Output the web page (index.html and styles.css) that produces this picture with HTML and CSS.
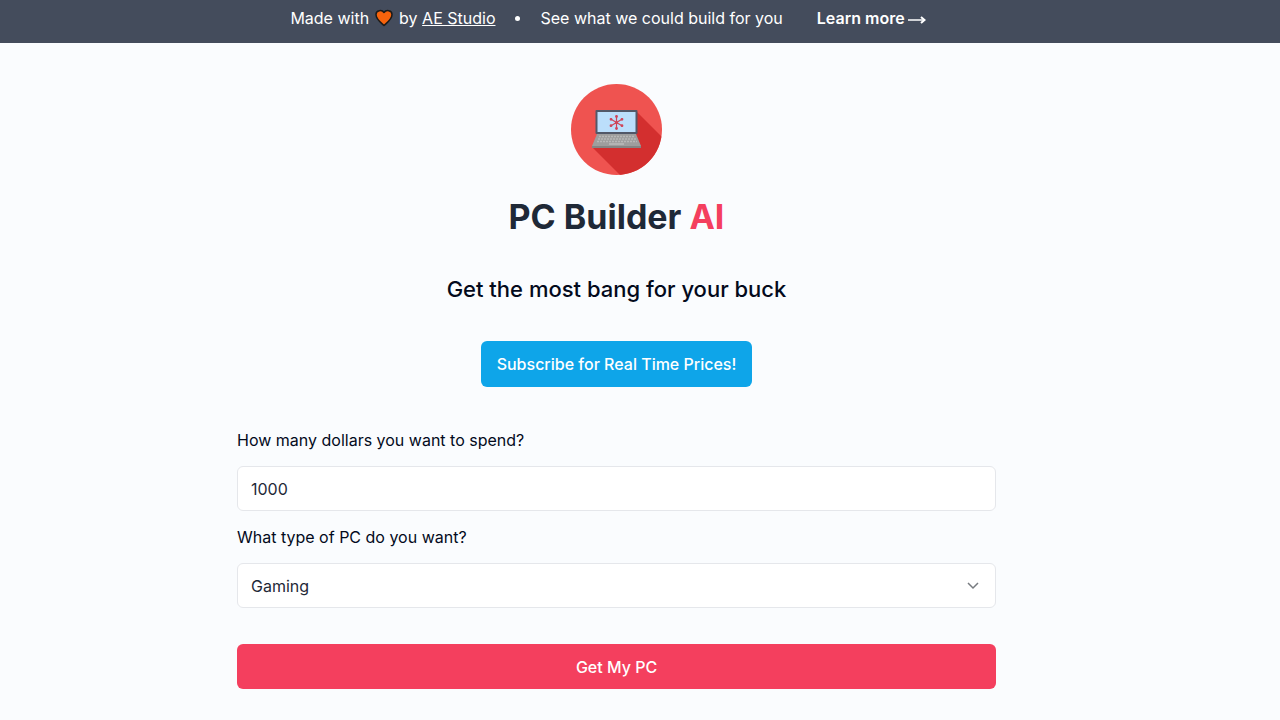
FILE: index.html
```html
<!DOCTYPE html>
<html lang="en">

<head>
    <meta charset="UTF-8">
    <meta name="viewport" content="width=device-width, initial-scale=1.0">
    <title>PC Builder AI</title>
    <link rel="stylesheet" href="styles.css">
</head>

<body>
    <!-- Top Banner -->
    <div class="banner">
        <p class="made-with">
            <span>Made with</span>
            <svg class="heart" viewBox="0 0 18 18" aria-hidden="true">
                <path d="M9 16.500C6.500 14 1 10.500 1 5.500C1 1 7 .5 9 3.500C11 .5 17 1 17 5.500C17 10.500 11.500 14 9 16.500Z" fill="#f7630c" stroke="#1b1a19" stroke-width="1.500" stroke-linejoin="round"/>
            </svg>
            <span>by <a href="#">AE Studio</a></span>
        </p>
        <span class="dot"></span>
        <p>See what we could build for you</p>
        <a class="learn-more" href="#">Learn more
            <svg class="arrow" viewBox="0 0 18 12" aria-hidden="true">
                <path d="M0 6H16" stroke="currentColor" stroke-width="1.500"/>
                <path d="M13 3L16.500 6L13 9" fill="none" stroke="currentColor" stroke-width="2"/>
            </svg>
        </a>
    </div>

    <!-- Main Content -->
    <main class="content">
        <svg class="logo" viewBox="0 0 91 91" role="img" aria-label="PC Builder AI logo">
            <defs>
                <clipPath id="circle"><circle cx="45.500" cy="45.500" r="45.500"/></clipPath>
            </defs>
            <g clip-path="url(#circle)">
                <rect width="91" height="91" fill="#ef5350"/>
                <path d="M65 27L101 63V101H59L22 64Z" fill="#d32f2f"/>
            </g>
            <rect x="24.500" y="26" width="42" height="24" rx="1" fill="#525868"/>
            <rect x="26.500" y="28" width="38" height="20" fill="#bbdefb"/>
            <path d="M26 50H65L70 62H21Z" fill="#9e9e9e"/>
            <path d="M21 62H70V64H21Z" fill="#858585"/>
            <path d="M28 52.500H64M27 55H65M26 57.500H66" stroke="#b8b8b8" stroke-width="1.500" stroke-dasharray="2 1"/>
            <path d="M38 60H53" stroke="#b4b4b4" stroke-width="2"/>
            <g stroke="#cf4358" stroke-width="1.200" fill="#cf4358">
                <path d="M45.500 33V44M40.500 35.500L50.500 41.500M50.500 35.500L40.500 41.500"/>
                <circle cx="45.500" cy="38.500" r="1"/>
                <circle cx="45.500" cy="32.500" r=".8"/>
                <circle cx="45.500" cy="44.500" r=".8"/>
                <circle cx="40" cy="35.300" r=".8"/>
                <circle cx="51" cy="41.700" r=".8"/>
                <circle cx="51" cy="35.300" r=".8"/>
                <circle cx="40" cy="41.700" r=".8"/>
            </g>
        </svg>

        <h1>PC Builder <span>AI</span></h1>
        <h2>Get the most bang for your buck</h2>
        <button class="subscribe" type="button">Subscribe for Real Time Prices!</button>

        <form class="builder-form">
            <label for="budget">How many dollars you want to spend?</label>
            <input id="budget" type="text" inputmode="numeric" value="1000">

            <label for="pcType">What type of PC do you want?</label>
            <div class="select-box">
                <select id="pcType">
                    <option>Gaming</option>
                </select>
                <svg class="chevron" viewBox="0 0 12 8" aria-hidden="true">
                    <path d="M1 1L6 6L11 1" fill="none" stroke="#777b80" stroke-width="1.500"/>
                </svg>
            </div>

            <button class="submit" type="submit">Get My PC</button>
        </form>
    </main>
</body>

</html>
```
FILE: styles.css
```css
* {
    box-sizing: border-box;
}

body {
    font-family: Inter, "Liberation Sans", sans-serif;
    font-size: 16px;
    line-height: 24px;
    margin: 0;
    background-color: #fafcfe;
    color: #030a1c;
}

h1,
h2,
p {
    margin: 0;
}

button,
input,
select {
    font: inherit;
}

.banner {
    display: flex;
    justify-content: center;
    align-items: center;
    padding: 6px 64px 13px 0;
    background-color: #444c5c;
    color: white;
}

.banner a {
    color: white;
}

.made-with {
    display: flex;
    align-items: center;
    gap: 6px;
}

.heart {
    width: 18px;
    height: 18px;
}

.dot {
    width: 5px;
    height: 5px;
    margin: 0 20px;
    border-radius: 50%;
    background-color: white;
}

.banner .learn-more {
    margin-left: 34px;
    font-weight: 600;
    text-decoration: none;
}

.arrow {
    width: 18px;
    height: 12px;
    margin-left: -1px;
    vertical-align: -2px;
}

.content {
    display: flex;
    flex-direction: column;
    align-items: center;
    width: calc(100% - 47px);
    padding: 41px 16px 31px;
}

.logo {
    width: 91px;
    height: 91px;
}

h1 {
    margin-top: 20px;
    font-size: 34px;
    line-height: 44px;
    font-weight: 700;
    color: #1f2937;
}

h1 span {
    color: #f43f5e;
}

h2 {
    margin-top: 34px;
    font-size: 22px;
    line-height: 32px;
    font-weight: 500;
}

.subscribe,
.submit {
    border: none;
    border-radius: 6px;
    color: white;
    font-weight: 500;
    cursor: pointer;
}

.subscribe {
    height: 46px;
    margin-top: 36px;
    padding: 0 16px;
    background-color: #0ea5e9;
}

.builder-form {
    display: flex;
    flex-direction: column;
    width: 100%;
    max-width: 759px;
    margin-top: 41px;
}

label {
    margin-bottom: 14px;
}

input,
select {
    width: 100%;
    height: 45px;
    padding: 0 13px;
    border: 1px solid #e5e7eb;
    border-radius: 6px;
    background-color: white;
    color: #1f2937;
}

input {
    margin-bottom: 14px;
}

.select-box {
    display: grid;
    align-items: center;
}

.select-box select,
.chevron {
    grid-area: 1 / 1;
}

select {
    appearance: none;
}

.chevron {
    justify-self: end;
    width: 12px;
    height: 8px;
    margin-right: 17px;
    pointer-events: none;
}

.submit {
    height: 45px;
    margin-top: 36px;
    background-color: #f43f5e;
}
```
